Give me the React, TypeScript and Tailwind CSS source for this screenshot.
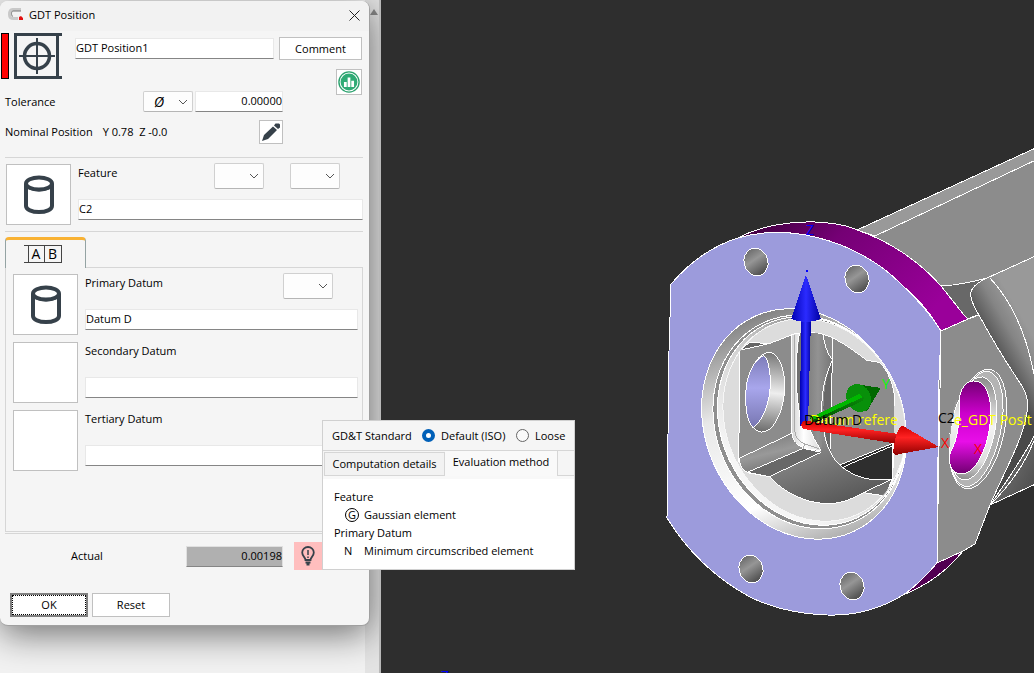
import React from 'react';

const CylinderIcon: React.FC = () => (
  <svg viewBox="0 0 32 40" className="h-10 w-8" fill="none" stroke="#36414a" aria-hidden="true">
    <path d="M3 9v22c0 3.500 6 6 13 6s13-2.500 13-6V9" strokeWidth="4" />
    <ellipse cx="16" cy="8.500" rx="13" ry="6" strokeWidth="4" />
    <path d="M4 11c3 5.500 21 5.500 24 0" strokeWidth="2.500" />
  </svg>
);

const PositionIcon: React.FC = () => (
  <svg viewBox="0 0 48 46" className="h-[46px] w-12 shrink-0" fill="none" stroke="#36414a" aria-hidden="true">
    <path d="M48 1.500H1.500V44.500H48M43.500 1v44" strokeWidth="3" />
    <circle cx="23" cy="23" r="12.500" strokeWidth="3.500" />
    <path d="M23 5v36M5 23h36" strokeWidth="2" />
  </svg>
);

const Combo: React.FC<{ label: string; value?: string; className?: string }> = ({ label, value = '', className = '' }) => (
  <div className={`relative w-[50px] shrink-0 ${className}`}>
    <select
      aria-label={label}
      className="h-full w-full appearance-none rounded-xs border border-[#d0d0d0] border-b-[#b5b5b5] bg-[#fdfdfd] pl-[10px] text-[14px] leading-4 italic"
    >
      <option>{value}</option>
    </select>
    <svg viewBox="0 0 10 6" className="pointer-events-none absolute top-1/2 right-[5px] h-[6px] w-[10px] -translate-y-1/2" fill="none" stroke="#555" aria-hidden="true">
      <path d="M1 1l4 4 4-4" />
    </svg>
  </div>
);

const fieldClass = 'h-[21px] min-w-0 border border-[#e8e8e8] border-b-[#858585] bg-white pb-[2px] outline-none';

const DatumRow: React.FC<{ id: string; label: string; value?: string; filled?: boolean; combo?: boolean }> = ({
  id,
  label,
  value = '',
  filled = false,
  combo = false,
}) => (
  <div className="flex h-[62px] items-start">
    <button aria-label={`Select ${label}`} className="mt-px flex h-[61px] w-[65px] shrink-0 items-center justify-center border border-[#c0c0c0] bg-white">
      {filled && <CylinderIcon />}
    </button>
    <div className="ml-[7px] flex min-w-0 flex-1 flex-col gap-[10px]">
      <div className="flex h-[26px] items-start pr-[25px]">
        <label htmlFor={id} className="flex-1 leading-5">{label}</label>
        {combo && <Combo label={`${label} modifier`} className="h-[26px]" />}
      </div>
      <input id={id} defaultValue={value} className={fieldClass} />
    </div>
  </div>
);

const GdtDialog: React.FC = () => (
  <section className="absolute top-px left-0 w-[370px] rounded-lg border-r border-b border-[#a0a0a0] bg-[#f5f5f5] shadow-[0_8px_36px_rgba(0,0,0,0.55)]">
    <header className="flex h-[30px] items-center rounded-t-lg bg-[#f2f2f2] pr-[9px] pb-[2px] pl-2">
      <svg viewBox="0 0 16 14" className="h-[14px] w-4" aria-hidden="true">
        <path d="M13 1.500H4.500C1.500 1.500 1.500 4 1.500 6.500s1 4 4 4H10" fill="none" stroke="#c9c9c9" strokeWidth="3" />
        <path d="M13 3H5C3 3 3 8 5 8.500" fill="none" stroke="#777" />
        <path d="M11 9l2-1 2 2v2h-4z" fill="#e21010" />
      </svg>
      <h1 className="ml-[5px] flex-1">GDT Position</h1>
      <button aria-label="Close">
        <svg viewBox="0 0 11 11" className="h-[11px] w-[11px]" stroke="#222" aria-hidden="true">
          <path d="M.5.5l10 10M10.500.5l-10 10" />
        </svg>
      </button>
    </header>

    <div className="flex h-[38px] items-start pt-[2px] pr-[7px] pl-px">
      <div className="h-[46px] w-2 shrink-0 border border-black bg-[#ff0000]" />
      <div className="ml-[5px] shrink-0">
        <PositionIcon />
      </div>
      <input aria-label="Name" defaultValue="GDT Position1" className={`${fieldClass} mt-[5px] ml-[13px] flex-1`} />
      <button className="mt-1 ml-[5px] h-[23px] w-[83px] border border-[#c0c0c0] bg-white">Comment</button>
    </div>

    <div className="flex items-start justify-between pr-[7px] pl-[5px]">
      <div className="flex w-[278px] flex-col gap-2 pt-[22px]">
        <div className="flex items-center">
          <label htmlFor="tolerance" className="flex-1">Tolerance</label>
          <Combo label="Tolerance zone" value="Ø" className="h-[21px]" />
          <input id="tolerance" defaultValue="0.00000" className={`${fieldClass} ml-[2px] w-[88px] text-right`} />
        </div>
        <div className="flex items-center">
          <span>Nominal Position</span>
          <span className="ml-[10px] flex-1">Y 0.78&nbsp; Z -0.0</span>
          <button aria-label="Edit nominal position" className="flex h-6 w-6 items-center justify-center border border-[#c0c0c0] bg-white">
            <svg viewBox="0 0 18 18" className="h-[18px] w-[18px]" fill="#36414a" aria-hidden="true">
              <path d="M0 18l2-6L11 3.500l4 3.500-9 9zM12 2.500l1.500-2 3.500 0 1 1v3L16 6z" />
            </svg>
          </button>
        </div>
      </div>
      <button aria-label="Statistics" className="flex h-[26px] w-[26px] items-center justify-center border border-[#c0c0c0] bg-white">
        <svg viewBox="0 0 24 24" className="h-[22px] w-[22px] shrink-0" aria-hidden="true">
          <circle cx="12" cy="12" r="11" fill="none" stroke="#2ba26e" strokeWidth="1.500" />
          <circle cx="12" cy="12" r="9.200" fill="#2fab75" />
          <path d="M6.500 12h3v5.500h-3zM10.500 7h3v10.500h-3zM14.500 10.500h3v7h-3z" fill="#fff" />
        </svg>
      </button>
    </div>

    <div className="mt-[13px] pr-[6px] pl-[5px]">
      <div className="flex items-start border-t border-[#d6d6d6] pt-[5px] pl-px">
        <button aria-label="Select feature" className="mt-px flex h-[61px] w-[65px] shrink-0 items-center justify-center border border-[#c0c0c0] bg-white">
          <CylinderIcon />
        </button>
        <div className="ml-[7px] flex min-w-0 flex-1 flex-col gap-[10px]">
          <div className="flex h-[26px] items-start gap-[26px] pr-[23px]">
            <label htmlFor="feature" className="flex-1 leading-5">Feature</label>
            <Combo label="Material condition" className="h-[26px]" />
            <Combo label="Feature modifier" className="h-[26px]" />
          </div>
          <input id="feature" defaultValue="C2" className={fieldClass} />
        </div>
      </div>

      <div className="mt-[6px] border-t border-[#d6d6d6] pt-[5px]">
        <button aria-label="Datums" className="relative -mb-px flex h-[31px] w-[81px] items-center justify-center rounded-t-sm border border-t-3 border-b-0 border-[#94a3a3] border-t-[#f9b233] bg-[#f5f5f5] pr-[6px]">
          <span className="flex h-[18px] border-y border-l-0 border-[#444] pl-1 text-[14px] leading-4">
            <span className="w-4 border-l border-[#444]">A</span>
            <span className="w-[18px] border-x border-[#444]">B</span>
          </span>
        </button>
        <div className="flex min-h-[265px] flex-col gap-[6px] border border-[#d6d6d6] pt-[5px] pr-1 pl-[7px]">
          <DatumRow id="primary" label="Primary Datum" value="Datum D" filled combo />
          <DatumRow id="secondary" label="Secondary Datum" />
          <DatumRow id="tertiary" label="Tertiary Datum" />
        </div>
      </div>

      <div className="mt-px flex items-center border-t border-[#d6d6d6] pt-2">
        <label htmlFor="actual" className="w-[181px] pl-[66px]">Actual</label>
        <input id="actual" readOnly defaultValue="0.00198" className="h-[21px] w-[97px] border border-[#e0e0e0] border-b-[#858585] bg-[#b0b0b0] pb-[2px] text-right" />
        <div className="ml-[11px] flex h-7 w-7 items-center justify-center bg-[#ffbebe]">
          <svg viewBox="0 0 14 20" className="h-5 w-[14px]" fill="none" stroke="#36414a" aria-hidden="true">
            <path d="M4.500 14C4.500 11 1.200 10.500 1.200 6.500a5.800 5.500 0 0 1 11.600 0c0 4-3.300 4.500-3.300 7.500z" strokeWidth="1.800" />
            <path d="M7 4v5M7 10.500v1.500" strokeWidth="1.500" />
            <path d="M4.500 16.500h5M5.500 18.500h3" strokeWidth="2" />
          </svg>
        </div>
      </div>

      <div className="mt-[23px] flex gap-1 pb-2 pl-[5px]">
        <button className="h-6 w-[78px] border-2 border-[#808080] bg-white">
          <span className="flex h-5 items-center justify-center border border-dotted border-black">OK</span>
        </button>
        <button className="h-6 w-[78px] border border-[#c0c0c0] bg-white">Reset</button>
      </div>
    </div>
  </section>
);

const radioClass =
  'h-[13px] w-[13px] shrink-0 appearance-none rounded-full border border-[#666] bg-[#fafafa] checked:border-4 checked:border-[#0060b8] checked:bg-white';

const StandardPopup: React.FC = () => (
  <aside className="absolute top-[420px] left-[322px] h-[150px] w-[253px] border border-[#d0d0d0] bg-white">
    <div className="flex h-[29px] items-center bg-[#f5f5f5] pl-[9px]">
      <span className="w-[80px] whitespace-nowrap">GD&amp;T Standard</span>
      <label className="ml-[10px] flex w-[84px] items-center gap-[6px] whitespace-nowrap">
        <input type="radio" name="standard" defaultChecked className={radioClass} />
        Default (ISO)
      </label>
      <label className="ml-[10px] flex items-center gap-[6px]">
        <input type="radio" name="standard" className={radioClass} />
        Loose
      </label>
    </div>
    <div className="flex h-[26px] items-end border-t border-[#d6d6d6] bg-[#f5f5f5] pl-px">
      <button className="h-6 w-[121px] border border-[#d6d6d6] bg-[#f2f2f2] whitespace-nowrap">Computation details</button>
      <button className="h-[25px] w-[113px] border-r border-[#d6d6d6] bg-[#f9f9f9] pb-1 whitespace-nowrap">Evaluation method</button>
      <div className="h-[25px] flex-1 border-b border-[#d6d6d6]" />
    </div>
    <div className="border-t-3 border-[#f8f8f8] px-[11px] pt-[9px] leading-[18px]">
      <p>Feature</p>
      <p className="flex items-center pl-[11px]">
        <span className="mr-[5px] flex h-[14px] w-[14px] items-center justify-center rounded-full border border-black">G</span>
        Gaussian element
      </p>
      <p>Primary Datum</p>
      <p className="flex pl-[10px]">
        <span className="w-5">N</span>
        Minimum circumscribed element
      </p>
    </div>
  </aside>
);

const screwHoles = [
  [756, 262],
  [857, 279],
  [751, 569],
  [852, 586],
];

const ModelView: React.FC = () => (
  <svg
    viewBox="381 0 653 673"
    preserveAspectRatio="xMidYMid slice"
    className="h-full w-full"
    stroke="#fff"
    fontSize="14"
    shapeRendering="crispEdges"
    role="img"
    aria-label="3D model view"
  >
    <defs>
      <linearGradient id="rim" x1="0" x2="1" y1="0" y2=".5">
        <stop offset="0" stopColor="#380038" />
        <stop offset=".4" stopColor="#750075" />
        <stop offset="1" stopColor="#9a009a" />
      </linearGradient>
      <linearGradient id="hole" x1="0" y1="0" x2=".3" y2="1">
        <stop offset="0" stopColor="#606060" />
        <stop offset=".5" stopColor="#969696" />
        <stop offset="1" stopColor="#565656" />
      </linearGradient>
      <linearGradient id="boss" gradientUnits="userSpaceOnUse" x1="976" y1="325" x2="1014" y2="303">
        <stop offset="0" stopColor="#4a4a4a" />
        <stop offset=".6" stopColor="#858585" />
        <stop offset="1" stopColor="#999" />
      </linearGradient>
      <linearGradient id="under" x1="0" x2="1" y1="0" y2="1">
        <stop offset="0" stopColor="#888" />
        <stop offset="1" stopColor="#454545" />
      </linearGradient>
      <linearGradient id="bevel" gradientUnits="userSpaceOnUse" x1="800" y1="306" x2="780" y2="545">
        <stop offset="0" stopColor="#858585" />
        <stop offset=".35" stopColor="#e8e8e8" />
        <stop offset=".75" stopColor="#fff" />
        <stop offset="1" stopColor="#aaa" />
      </linearGradient>
      <linearGradient id="lip" gradientUnits="userSpaceOnUse" x1="740" y1="450" x2="900" y2="380">
        <stop offset="0" stopColor="#f6f6f6" />
        <stop offset=".5" stopColor="#d0d0d0" />
        <stop offset="1" stopColor="#777" />
      </linearGradient>
      <linearGradient id="collar" x1="0" y1="0" x2="0" y2="1">
        <stop offset="0" stopColor="#8a8a8a" />
        <stop offset=".45" stopColor="#f4f4f4" />
        <stop offset=".8" stopColor="#ddd" />
        <stop offset="1" stopColor="#8a8a8a" />
      </linearGradient>
      <linearGradient id="magenta" x1="0" y1="0" x2="0" y2="1">
        <stop offset="0" stopColor="#740074" />
        <stop offset=".35" stopColor="#cc00cc" />
        <stop offset=".65" stopColor="#e80ee8" />
        <stop offset="1" stopColor="#700070" />
      </linearGradient>
      <linearGradient id="lens" x1="0" y1="0" x2="0" y2="1">
        <stop offset="0" stopColor="#7d7cb8" />
        <stop offset=".45" stopColor="#a8a6ec" />
        <stop offset="1" stopColor="#7776b0" />
      </linearGradient>
      <linearGradient id="sleeve" x1="0" y1="0" x2="0" y2="1">
        <stop offset="0" stopColor="#777" />
        <stop offset=".5" stopColor="#eee" />
        <stop offset="1" stopColor="#6a6a6a" />
      </linearGradient>
      <linearGradient id="ledge" x1="0" y1="0" x2=".4" y2="1">
        <stop offset="0" stopColor="#707070" />
        <stop offset=".6" stopColor="#999" />
        <stop offset="1" stopColor="#777" />
      </linearGradient>
      <linearGradient id="floor" x1="0" y1="0" x2=".6" y2="1">
        <stop offset="0" stopColor="#999" />
        <stop offset="1" stopColor="#585858" />
      </linearGradient>
      <linearGradient id="column" x1="0" y1="0" x2="1" y2="0">
        <stop offset="0" stopColor="#6c6c6c" />
        <stop offset=".6" stopColor="#929292" />
        <stop offset="1" stopColor="#777" />
      </linearGradient>
      <linearGradient id="channel">
        <stop offset="0" stopColor="#d4d4d4" />
        <stop offset=".4" stopColor="#fff" />
        <stop offset="1" stopColor="#dadada" />
      </linearGradient>
      <linearGradient id="blue">
        <stop offset="0" stopColor="#0000b0" />
        <stop offset=".5" stopColor="#2b2bff" />
        <stop offset="1" stopColor="#0000a0" />
      </linearGradient>
      <linearGradient id="red" x1="0" y1="0" x2="0" y2="1">
        <stop offset="0" stopColor="#d00000" />
        <stop offset=".4" stopColor="#ff2222" />
        <stop offset="1" stopColor="#900000" />
      </linearGradient>
      <linearGradient id="green" x1="0" y1="0" x2="0" y2="1">
        <stop offset="0" stopColor="#0a920a" />
        <stop offset="1" stopColor="#004c00" />
      </linearGradient>
      <clipPath id="bore">
        <ellipse cx="814" cy="420" rx="88" ry="104" transform="rotate(-25 814 420)" />
      </clipPath>
    </defs>

    {/* arm behind the flange */}
    <path d="M856 230L1040 146V510L990 505 930 470 860 300z" fill="#8c8c8c" stroke="none" />
    <path d="M857 230L1040 146V158L875 236z" fill="#999" />
    <path d="M941 286Q962 285 987 278L978 315 967 319z" fill="#686868" />
    <path d="M987 278Q968 287 971 297 973 306 979 315C996 347 1008 365 1020 383Q1030 397 1027 412C1023 440 1004 472 990 505L1040 482V254z" fill="url(#boss)" />
    <path d="M1027 412C1023 440 1004 472 990 505L1040 482V424Q1029 450 990 505z" fill="url(#under)" />
    <path d="M1040 424Q1026 470 990 505M990 278Q1022 312 1034 374M987 278L1040 254" fill="none" />
    <path d="M1040 482L990 505 975 544V600H1040z" fill="#2e2e2e" stroke="none" />
    <path d="M990 505L1040 482" />

    {/* flange side face and rim */}
    <path d="M941 331L968 319 979 315C996 347 1008 365 1020 383Q1030 397 1027 412C1023 440 1004 472 990 505L975 544 963 551 937 563z" fill="#8c8c8c" />
    <path d="M903 595L937 563 963 551Q940 580 903 595z" fill="#520052" />
    <path d="M738 238C760 226 790 221 815 222 835 223 847 225 857 230 890 241 920 262 941 286L964 315 968 319 941 331C922 300 880 240 738 238z" fill="url(#rim)" />

    {/* front face */}
    <path
      d="M671 284C690 262 712 246 738 238 765 230 790 231 815 237 850 245 880 263 900 283 916 298 931 315 941 331L939 380 938 458 937 563C926 576 915 587 903 595 880 609 853 616 827 615 797 614 772 608 750 597 715 578 688 552 667 518L669 351z"
      fill="#9c9bdc"
    />
    {screwHoles.map(([x, y]) => (
      <ellipse key={`${x}-${y}`} cx={x} cy={y} rx="12" ry="14" transform={`rotate(-15 ${x} ${y})`} fill="url(#hole)" />
    ))}

    {/* main bore rings */}
    <ellipse cx="804" cy="424" rx="98.700" ry="118.400" transform="rotate(-24.600 804 424)" fill="url(#bevel)" />
    <ellipse cx="809.500" cy="422" rx="93.500" ry="109.500" transform="rotate(-25 809.500 422)" fill="#8f8f8f" />
    <ellipse cx="811.500" cy="421" rx="91" ry="107" transform="rotate(-25 811.500 421)" fill="url(#lip)" />
    <ellipse cx="814" cy="420" rx="88" ry="104" transform="rotate(-25 814 420)" fill="#dcdcdc" stroke="#f6f6f6" />

    {/* bore interior */}
    <g clipPath="url(#bore)">
      <g transform="translate(690 290) scale(.33333)" strokeWidth="3">
        <path
          d="M150 180L178 158 240 160 310 133Q370 118 425 142C470 165 495 185 530 211L568 217C600 250 608 280 614 320L610 565 585 618 520 608C480 630 450 641 410 641 340 638 280 605 238 560L172 548 146 515z"
          fill="#8c8c8c"
        />
        <path d="M614 320L650 320 650 480 610 565z" fill="#dcdcdc" stroke="none" />
        <path d="M150 180L178 158 240 160 208 168z" fill="#666" />
        <path d="M330 128Q370 124 400 135 404 180 427 210 395 270 395 350C395 430 410 470 420 490L393 487 335 420C315 300 315 230 330 128z" fill="url(#column)" stroke="none" />
        <path d="M427 210C395 280 390 420 422 490z" fill="#686868" stroke="none" />
        <path d="M400 135Q404 180 427 210 395 280 395 350C395 430 415 495 450 525" fill="none" />
        <path d="M427 142V210L420 480" fill="none" />
        <path d="M238 560L393 487 400 430C408 480 430 510 450 525 480 555 530 567 607 567L520 608C480 630 450 641 410 641 340 638 280 605 238 560z" fill="url(#floor)" stroke="none" />
        <path d="M238 560C280 605 340 638 410 641 450 641 480 630 520 608M450 525C480 555 530 567 607 567" fill="none" />
        <path d="M450 525L608 460V568H545C510 565 475 548 450 525z" fill="#2e2e2e" />
        <path d="M462 530L608 467" />
        <path d="M607 567L520 608 585 618z" fill="#707070" />
        <path d="M148 505L305 430 340 475 172 547Q150 540 148 505z" fill="url(#ledge)" />
        <path d="M172 547L340 475 393 487 238 560z" fill="#686868" />
        <path d="M306 133L328 130C312 220 318 330 335 405L355 410Q370 445 393 482L345 476Q308 462 306 430z" fill="url(#channel)" />
        <path d="M315 135V425Q318 452 345 462L388 476M345 462l-6 14" fill="none" stroke="#aaa" />
        <ellipse cx="226" cy="307" rx="57" ry="120" transform="rotate(6 226 307)" fill="url(#sleeve)" />
        <path d="M221 196C180 220 166 270 167 330 168 370 175 400 190 414 218 390 240 340 241 280 241 240 234 205 221 196z" fill="url(#lens)" />
      </g>
    </g>

    {/* side bore */}
    <g transform="translate(900 280) scale(.33333)" strokeWidth="3">
      <ellipse cx="234" cy="447" rx="79" ry="183" transform="rotate(12 234 447)" fill="#999" />
      <ellipse cx="230" cy="447" rx="72" ry="176" transform="rotate(12 230 447)" fill="#b4b4b4" />
      <ellipse cx="219" cy="445" rx="66" ry="157" transform="rotate(11 219 445)" fill="url(#collar)" />
      <path d="M220 303C255 303 272 340 272 400 272 480 235 580 185 582 158 582 145 555 148 525 165 490 180 460 180 345 185 322 200 303 220 303z" fill="url(#magenta)" />
      <path d="M170 360Q150 420 148 500" fill="none" stroke="#999" />
    </g>

    {/* axis triad and annotations */}
    <g stroke="none" fontFamily="'Open Sans', 'Noto Sans', sans-serif">
      <g transform="translate(690 290) scale(.33333)">
        <path d="M503 283L572 294 530 365z" fill="#006800" />
        <ellipse cx="506" cy="324" rx="36" ry="43" transform="rotate(-25 506 324)" fill="#08900a" />
        <path d="M360 383L508 312Q525 312 520 332L370 400z" fill="url(#green)" />
        <path d="M360 383L508 312 518 322 366 392z" fill="#00b800" />
      </g>
      <text x="810" y="425" fill="#ff0">Datum refere</text>
      <path d="M801 319H811L808 424 800 426z" fill="url(#blue)" />
      <path d="M806 275L821 319Q806 325 791 319z" fill="url(#blue)" />
      <path d="M806 270h2v2h-2z" fill="#00f" />
      <path d="M802 422Q805 419 812 422L899 434V444L804 429Q800 426 802 422z" fill="url(#red)" />
      <path d="M903 426Q896 426 893 453 895 456 899 454L939 447z" fill="url(#red)" />
      <text x="804" y="425" fill="#000">Datum D</text>
      <text x="954" y="425" fill="#ff0">e_GDT Posit</text>
      <text x="938" y="423" fill="#000">C2</text>
      <text x="941" y="448" fill="#f00">X</text>
      <text x="974" y="454" fill="#f00">X</text>
      <text x="882" y="389" fill="#0f0">Y</text>
      <text x="806" y="235" fill="#00f">Z</text>
      <text x="441" y="681" fill="#00f">Z</text>
    </g>
  </svg>
);

const App: React.FC = () => {
  return (
    <main className="relative flex h-screen w-full overflow-hidden bg-[#2e2e2e] font-['Open_Sans','Noto_Sans',sans-serif] text-[11px] leading-4 text-black">
      <div className="relative w-[381px] shrink-0 overflow-hidden border-r-2 border-[#b8b8b8] bg-[#f2f2f2]">
        <div className="ml-auto flex h-full w-[14px] justify-center bg-[#e4e4e4] pt-[9px]">
          <svg viewBox="0 0 8 6" className="ml-1 h-[6px] w-2" fill="#888" aria-hidden="true">
            <path d="M4 0l4 6H0z" />
          </svg>
        </div>
        <GdtDialog />
      </div>
      <div className="min-w-0 flex-1">
        <ModelView />
      </div>
      <StandardPopup />
    </main>
  );
};

export default App;
